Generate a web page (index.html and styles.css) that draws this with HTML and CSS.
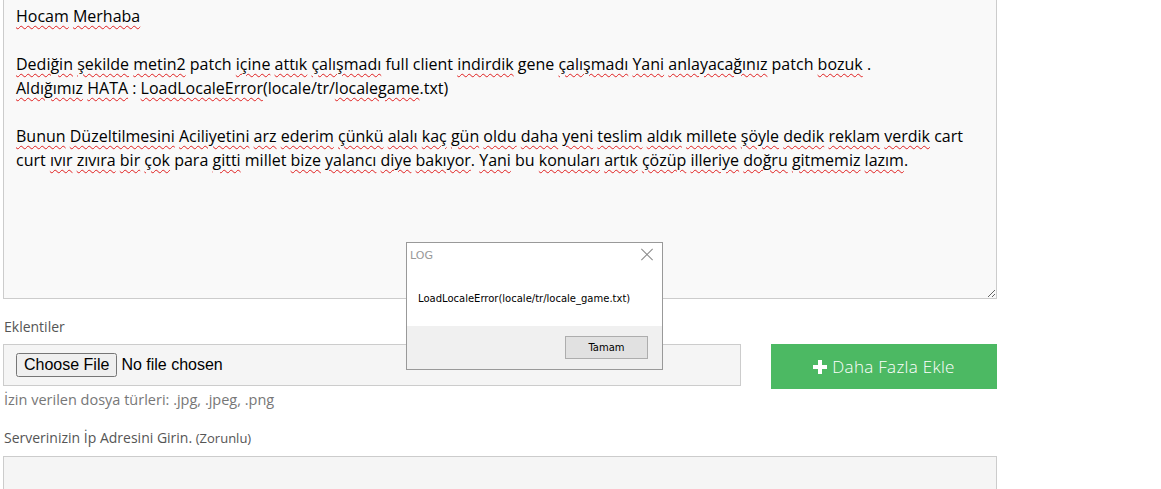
FILE: index.html
```html
<!DOCTYPE html>
<html lang="tr">
<head>
<meta charset="utf-8">
<title>Destek Talebi</title>
<link rel="stylesheet" href="styles.css">
</head>
<body>

<div class="form">
	<!-- mesaj alani -->
	<div class="message">
		<p><span class="sp">Hocam</span> <span class="sp">Merhaba</span></p>
		<p>&nbsp;</p>
		<p><span class="sp">Dediğin</span> <span class="sp">şekilde</span> <span class="sp">metin2</span> patch <span class="sp">içine</span> <span class="sp">attık</span> <span class="sp">çalışmadı</span> full client <span class="sp">indirdik</span> gene <span class="sp">çalışmadı</span> <span class="sp">Yani</span> <span class="sp">anlayacağınız</span> patch <span class="sp">bozuk</span> .</p>
		<p><span class="sp">Aldığımız</span> <span class="sp">HATA</span> : <span class="sp">LoadLocaleError</span>(locale/tr/<span class="sp">localegame</span>.txt)</p>
		<p>&nbsp;</p>
		<p><span class="sp">Bunun</span> <span class="sp">Düzeltilmesini</span> <span class="sp">Aciliyetini</span> <span class="sp">arz</span> <span class="sp">ederim</span> <span class="sp">çünkü</span> <span class="sp">alalı</span> <span class="sp">kaç</span> <span class="sp">gün</span> <span class="sp">oldu</span> <span class="sp">daha</span> <span class="sp">yeni</span> <span class="sp">teslim</span> <span class="sp">aldık</span> <span class="sp">millete</span> <span class="sp">şöyle</span> <span class="sp">dedik</span> <span class="sp">reklam</span> <span class="sp">verdik</span> cart curt <span class="sp">ıvır</span> <span class="sp">zıvıra</span> <span class="sp">bir</span> <span class="sp">çok</span> para <span class="sp">gitti</span> millet <span class="sp">bize</span> <span class="sp">yalancı</span> <span class="sp">diye</span> <span class="sp">bakıyor</span>. <span class="sp">Yani</span> bu <span class="sp">konuları</span> <span class="sp">artık</span> <span class="sp">çözüp</span> <span class="sp">illeriye</span> <span class="sp">doğru</span> <span class="sp">gitmemiz</span> <span class="sp">lazım</span>.</p>
	</div>

	<!-- ek dosyalar -->
	<label class="label label_files">Eklentiler</label>
	<div class="files_row">
		<div class="file_box">
			<input type="file" class="file_input">
		</div>
		<a class="btn_add" href="#"><span class="plus"></span>Daha Fazla Ekle</a>
	</div>
	<p class="hint">İzin verilen dosya türleri: .jpg, .jpeg, .png</p>

	<label class="label label_ip">Serverinizin İp Adresini Girin. <small>(Zorunlu)</small></label>
	<div class="ip_box"></div>
</div>

<!-- oyun istemcisi hata penceresi -->
<div class="dialog">
	<div class="dialog_title">
		<span>LOG</span>
		<span class="dialog_close"></span>
	</div>
	<div class="dialog_body">LoadLocaleError(locale/tr/locale_game.txt)</div>
	<div class="dialog_foot">
		<button class="dialog_btn">Tamam</button>
	</div>
</div>

</body>
</html>
```

FILE: styles.css
```css
	html,body{margin:0;padding:0;background:#fff;font-family:"Open Sans","Noto Sans",sans-serif;color:#000;}

	.form {
		width: 994px;
		padding-left: 3px;
	}

	/* mesaj alani */
	.message {
		height: 294px;
		padding: 4px 12px 0 12px;
		border: 1px solid #ccc;
		border-top: none;
		background-color: #f9f9f9;
		font-size: 16px;
		line-height: 24px;
		resize: both;
		overflow: hidden;
	}
	.message p {
		margin: 0;
	}
	.sp {
		text-decoration: underline wavy #e02020;
		text-decoration-thickness: 1px;
		text-underline-offset: 3px;
	}

	.label {
		display: block;
		padding-left: 1px;
		font-size: 14px;
		color: #555;
	}
	.label_files {
		margin-top: 18px;
		line-height: 20px;
	}
	.label_ip {
		margin-top: 18px;
		line-height: 20px;
	}
	.label small {
		font-size: 13px;
	}

	.files_row {
		display: flex;
		align-items: flex-start;
		gap: 30px;
		margin-top: 7px;
	}
	.file_box {
		width: 738px;
		height: 42px;
		border: 1px solid #ccc;
		background-color: #f5f5f5;
		display: flex;
		align-items: center;
		padding-left: 12px;
		box-sizing: border-box;
	}
	.file_input {
		font-family: "Liberation Sans", Arial, sans-serif;
		font-size: 16px;
	}
	.btn_add {
		display: flex;
		align-items: center;
		justify-content: center;
		width: 226px;
		height: 45px;
		background-color: #4cb963;
		color: #fff;
		font-size: 17px;
		font-weight: 300;
		text-decoration: none;
		letter-spacing: 0.3px;
	}
	.plus {
		position: relative;
		width: 14px;
		height: 14px;
		margin-right: 5px;
	}
	.plus:before, .plus:after {
		content: "";
		position: absolute;
		background-color: #fff;
	}
	.plus:before {
		left: 0;
		top: 5px;
		width: 14px;
		height: 4px;
	}
	.plus:after {
		left: 5px;
		top: 0;
		width: 4px;
		height: 14px;
	}

	.hint {
		margin: 1px 0 0 0;
		padding-left: 1px;
		font-size: 14.5px;
		line-height: 20px;
		color: #777;
	}

	.ip_box {
		margin-top: 8px;
		height: 40px;
		border: 1px solid #ccc;
		background-color: #f5f5f5;
	}

	/* hata penceresi */
	.dialog {
		position: absolute;
		left: 406px;
		top: 242px;
		width: 255px;
		height: 126px;
		border: 1px solid #999;
		background-color: #fff;
		font-family: "DejaVu Sans", "Noto Sans", sans-serif;
		display: flex;
		flex-direction: column;
	}
	.dialog_title {
		display: flex;
		justify-content: space-between;
		align-items: center;
		height: 24px;
		padding: 0 9px 0 3px;
		font-size: 11px;
		color: #999;
	}
	.dialog_close {
		position: relative;
		width: 12px;
		height: 12px;
	}
	.dialog_close:before, .dialog_close:after {
		content: "";
		position: absolute;
		left: -2px;
		top: 5px;
		width: 16px;
		height: 1px;
		background-color: #888;
		transform: rotate(45deg);
	}
	.dialog_close:after {
		transform: rotate(-45deg);
	}
	.dialog_body {
		flex: 1;
		padding: 26px 0 0 11px;
		font-size: 10px;
		color: #000;
	}
	.dialog_foot {
		height: 43px;
		background-color: #f0f0f0;
		display: flex;
		justify-content: flex-end;
		align-items: center;
		padding-right: 14px;
	}
	.dialog_btn {
		width: 83px;
		height: 23px;
		border: 1px solid #adadad;
		background-color: #e1e1e1;
		font-family: "DejaVu Sans", "Noto Sans", sans-serif;
		font-size: 10px;
		color: #000;
		padding: 0;
	}
```
